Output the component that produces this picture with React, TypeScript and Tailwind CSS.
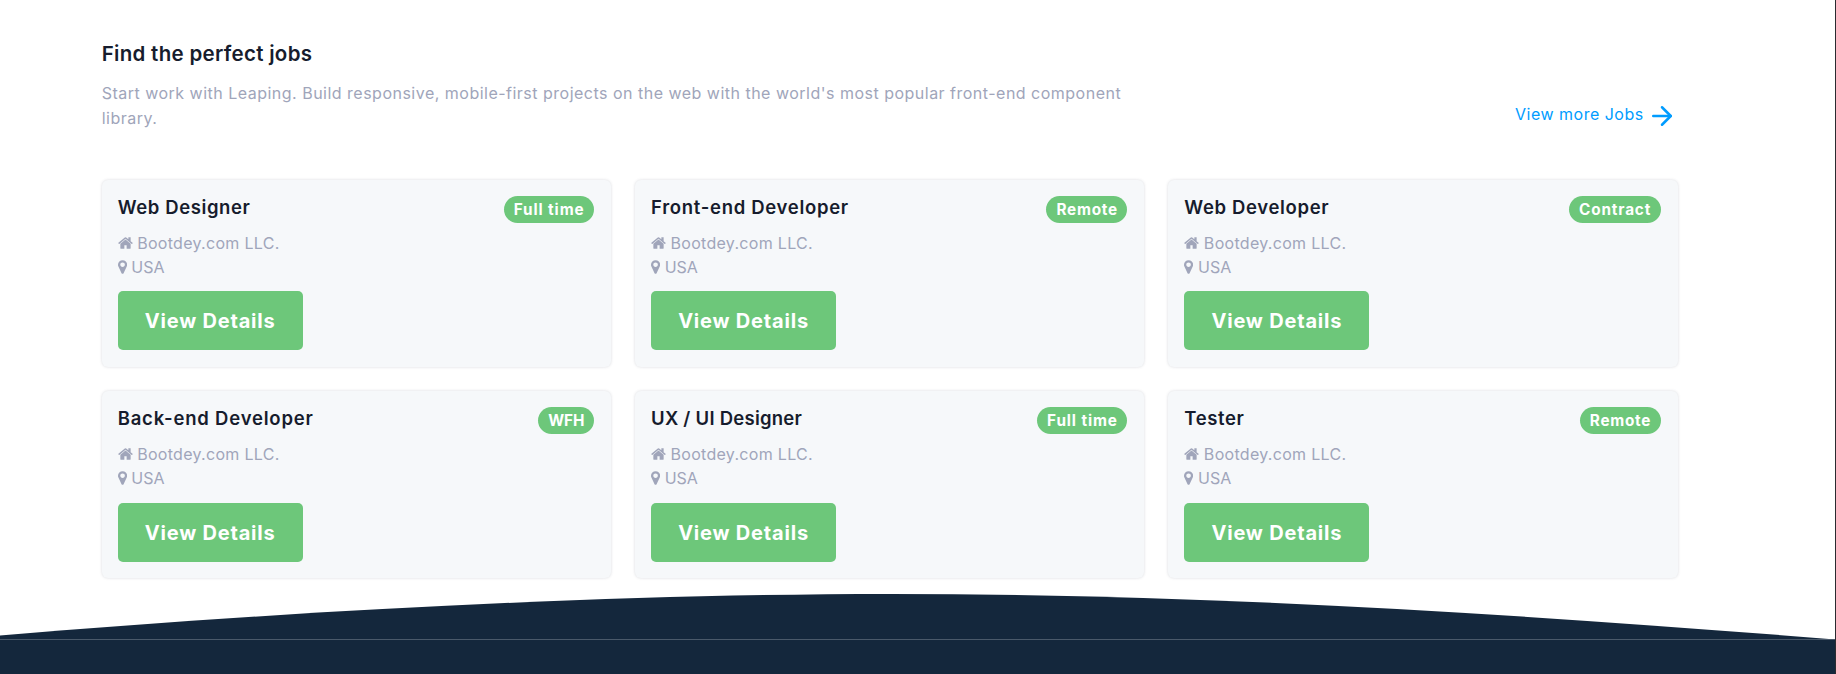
import { ArrowRight } from "lucide-react";

type Job = { title: string; titleClass: string; type: string; typeClass: string };

const jobs: Job[] = [
  { title: "Web Designer", titleClass: "tracking-[0.6px]", type: "Full time", typeClass: "tracking-[0.9px]" },
  { title: "Front-end Developer", titleClass: "tracking-[0.7px]", type: "Remote", typeClass: "tracking-[0.75px]" },
  { title: "Web Developer", titleClass: "tracking-[0.65px]", type: "Contract", typeClass: "tracking-[0.85px]" },
  { title: "Back-end Developer", titleClass: "tracking-[0.8px]", type: "WFH", typeClass: "tracking-[0px]" },
  { title: "UX / UI Designer", titleClass: "tracking-[0.25px]", type: "Full time", typeClass: "tracking-[0.9px]" },
  { title: "Tester", titleClass: "tracking-[0.6px]", type: "Remote", typeClass: "tracking-[0.75px]" },
];

function HomeIcon() {
  return (
    <svg viewBox="64 0 1664 1792" className="h-4 w-[15px] shrink-0" fill="currentColor">
      <path d="M1472 992v480q0 26-19 45t-45 19h-384v-384h-256v384h-384q-26 0-45-19t-19-45v-480q0-1 .5-3t.5-3l575-474 575 474q1 2 1 6zm223-69l-62 74q-8 9-21 11h-3q-13 0-21-7l-692-577-692 577q-12 8-24 7-13-2-21-11l-62-74q-8-10-7-23.5t11-21.5l719-599q32-26 76-26t76 26l244 204v-195q0-14 9-23t23-9h192q14 0 23 9t9 23v408l219 182q10 8 11 21.5t-7 23.5z" />
    </svg>
  );
}

function MarkerIcon() {
  return (
    <svg viewBox="384 0 1024 1792" className="h-4 w-[9.14px] shrink-0" fill="currentColor">
      <path d="M1152 640q0-106-75-181t-181-75-181 75-75 181 75 181 181 75 181-75 75-181zm256 0q0 109-33 179l-364 774q-16 33-47.5 52t-67.5 19-67.5-19-46.5-52l-365-774q-33-70-33-179 0-212 150-362t362-150 362 150 150 362z" />
    </svg>
  );
}

function JobCard({ title, titleClass, type, typeClass }: Job) {
  return (
    <article className="flex h-[187.4px] items-start justify-between rounded-md bg-[#f6f8fa] pt-[13.5px] pr-[17px] pl-4 shadow-[0_0_3px_rgba(60,72,88,0.2)]">
      <div>
        <h3 className={`text-[18.5px] leading-7 font-semibold whitespace-nowrap text-[#161c2d] ${titleClass}`}>{title}</h3>
        <div className="mt-[9.5px] flex h-6 items-center gap-[4.5px] tracking-[0.3px]">
          <HomeIcon />
          <span>Bootdey.com LLC.</span>
        </div>
        <div className="flex h-6 items-center gap-[4.5px]">
          <MarkerIcon />
          <span>USA</span>
        </div>
        <button className="mt-[12.6px] flex h-[59px] w-[185px] items-center justify-center rounded-[5px] bg-[#6dc77a] pt-px text-[20px] font-bold tracking-[0.8px] text-white">
          View Details
        </button>
      </div>
      <span className={`mt-[3px] flex h-[27px] items-center rounded-full bg-[#6dc77a] pt-px pr-[9.5px] pl-[10px] text-[15.3px] font-bold whitespace-nowrap text-white ${typeClass}`}>
        {type}
      </span>
    </article>
  );
}

export default function App() {
  return (
    <div className="flex h-[674px] w-full flex-col overflow-hidden border-r border-[#2b2b30] bg-white font-['Inter',sans-serif] text-[16px] text-[#a0a5ba]">
      <main className="flex h-[592.5px] shrink-0 flex-col pr-[157.3px] pl-[101.7px]">
        <header className="flex h-[179.6px] shrink-0 justify-between pt-[39px]">
          <div className="w-[1050px]">
            <h2 className="text-[20.5px] leading-[30px] font-semibold tracking-[0.3px] text-[#161c2d]">Find the perfect jobs</h2>
            <p className="mt-3 leading-[25.4px] tracking-[0.49px]">
              Start work with Leaping. Build responsive, mobile-first projects on the web with the world's most popular front-end component library.
            </p>
          </div>
          <a href="#" className="mt-[62px] flex h-[30px] items-center text-[#009cff]">
            <span className="mr-[4px] -mt-[4px] tracking-[0.5px]">View more Jobs</span>
            <ArrowRight size={30} strokeWidth={2} className="-ml-px mr-px" />
          </a>
        </header>
        <section className="grid grid-cols-3 gap-6">
          {jobs.map((job) => (
            <JobCard key={job.title} {...job} />
          ))}
        </section>
      </main>
      <footer className="grow">
        <svg viewBox="0 592 1835 47" preserveAspectRatio="none" className="block h-[46.5px] w-full">
          <path fill="#14273c" d="M0 635C300 609.5 620 593 890 593C1190 593 1500 611.5 1835 639V640H0Z" />
        </svg>
        <div className="h-9 border-t border-[#4a596a] bg-[#14273c]" />
      </footer>
    </div>
  );
}
